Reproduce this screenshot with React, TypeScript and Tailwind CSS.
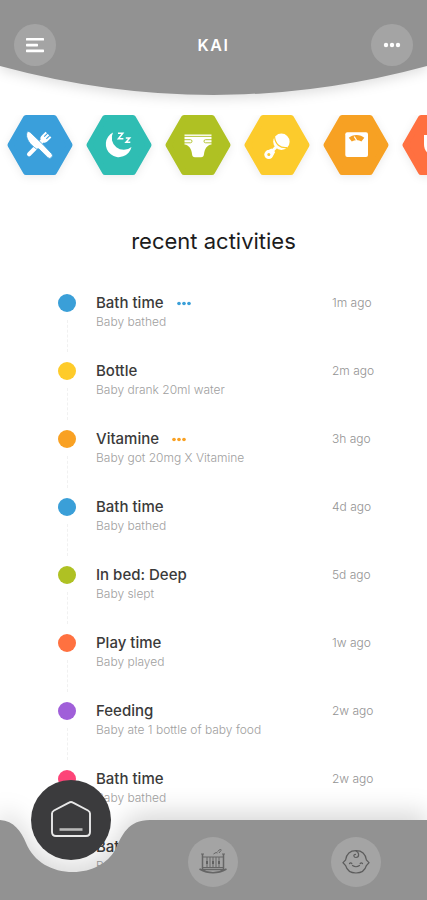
import type { ReactNode } from 'react';

interface Activity {
  title: string;
  detail: string;
  time: string;
  dot: string;
  more?: string;
}

const activities: Activity[] = [
  { title: 'Bath time', detail: 'Baby bathed', time: '1m ago', dot: 'bg-[#3a9fd8]', more: 'text-[#3a9fd8]' },
  { title: 'Bottle', detail: 'Baby drank 20ml water', time: '2m ago', dot: 'bg-[#fecb2a]' },
  { title: 'Vitamine', detail: 'Baby got 20mg X Vitamine', time: '3h ago', dot: 'bg-[#f9a123]', more: 'text-[#f9a123]' },
  { title: 'Bath time', detail: 'Baby bathed', time: '4d ago', dot: 'bg-[#3a9fd8]' },
  { title: 'In bed: Deep', detail: 'Baby slept', time: '5d ago', dot: 'bg-[#afc123]' },
  { title: 'Play time', detail: 'Baby played', time: '1w ago', dot: 'bg-[#ff7140]' },
  { title: 'Feeding', detail: 'Baby ate 1 bottle of baby food', time: '2w ago', dot: 'bg-[#a05fd9]' },
  { title: 'Bath time', detail: 'Baby bathed', time: '2w ago', dot: 'bg-[#fd4578]' },
  { title: 'Bath time', detail: 'Baby bathed', time: '3w ago', dot: 'bg-[#3a9fd8]' },
];

// Icons share the 66x60 hexagon viewBox, currentColor is the hexagon colour
const categories: { label: string; color: string; icon: ReactNode }[] = [
  {
    label: 'Feeding',
    color: 'text-[#3a9fdb]',
    icon: (
      <>
        <g transform="translate(31.5 29.5) rotate(45)">
          <path fill="#fff" d="M-4 -14 V-9 C-4 -6.5 -3.2 -5.4 -1.9 -5 V13.5 A2.1 2.1 0 0 0 2.3 13.5 V-5 C3.4 -5.4 4.2 -6.5 4.2 -9 V-14 Z" />
          <path stroke="currentColor" strokeWidth="1" d="M-1.5 -15 V-9.5 M1.6 -15 V-9.5" />
        </g>
        <path
          fill="#fff"
          stroke="currentColor"
          strokeWidth="0.8"
          d="M20.2 16.8 C21.5 16 23 17 24 18 L36 29.5 L44.5 38.5 A2.7 2.7 0 0 1 40.7 42.5 L31.8 33.8 L29.5 34 C23.5 30 17.5 23 20.2 16.8 Z"
        />
      </>
    ),
  },
  {
    label: 'Sleep',
    color: 'text-[#2fbdb3]',
    icon: (
      <>
        <path fill="#fff" d="M27 17.5 A13 13 0 1 0 45.5 32 A12 12 0 0 1 27 17.5 Z" />
        <path fill="none" stroke="#fff" strokeWidth="1.5" d="M32 18.3 H36.8 L32.4 23.8 H37.4 M39.8 23 H43.7 L40 27.2 H44.3" />
      </>
    ),
  },
  {
    label: 'Diaper',
    color: 'text-[#afc123]',
    icon: (
      <>
        <path
          fill="#fff"
          d="M19.5 19.5 H46.5 V29.5 C42 30 39.5 34 39 39 C38.8 41.3 37.8 42.3 36 42.3 H30 C28.2 42.3 27.2 41.3 27 39 C26.5 34 24 30 19.5 29.5 Z"
        />
        <path fill="none" stroke="currentColor" strokeWidth="0.9" d="M19 21.4 H47 M19 24.7 H25.5 Q27 24.7 27 26.2 Q27 27.8 25.5 27.8 H19 M47 24.7 H40.5 Q39 24.7 39 26.2 Q39 27.8 40.5 27.8 H47" />
      </>
    ),
  },
  {
    label: 'Play',
    color: 'text-[#fccb2c]',
    icon: (
      <>
        <path stroke="#fff" strokeWidth="3" d="M26 38.5 L33 31" />
        <path fill="#fff" d="M27.5 33.4 L31.2 37 L28.8 41.2 L22.4 36 Z" />
        <circle cx="24.8" cy="39.6" r="4.5" fill="#fff" />
        <circle cx="24.8" cy="39.6" r="1.5" fill="currentColor" />
        <circle cx="37.4" cy="26.8" r="8.2" fill="#fff" />
        <path fill="none" stroke="currentColor" strokeWidth="1.2" d="M30.6 22 C31.2 29 36 33.4 43 32.6" />
      </>
    ),
  },
  {
    label: 'Weight',
    color: 'text-[#f7a123]',
    icon: (
      <>
        <rect x="22.3" y="17.3" width="22.7" height="24.7" rx="2" fill="#fff" />
        <path fill="currentColor" d="M25.8 22.8 C29 18.9 38 18.9 41.3 22.8 L38.4 26.6 C35.8 24.9 31.5 24.9 28.8 26.6 Z" />
        <path stroke="#fff" strokeWidth="1.2" d="M31.2 21.5 L34 26" />
      </>
    ),
  },
  {
    label: 'Bath',
    color: 'text-[#ff7040]',
    icon: <path fill="#fff" d="M22 20 H44 V29 C44 36 39 40 33 40 C26 40 22 36 22 29 Z" />,
  },
];

function MoreDots({ className }: { className: string }) {
  return (
    <svg className={className} viewBox="0 0 18 6" fill="currentColor">
      <circle cx="3" cy="3" r="2.2" />
      <circle cx="9" cy="3" r="2.2" />
      <circle cx="15" cy="3" r="2.2" />
    </svg>
  );
}

function Header() {
  return (
    <header className="relative h-[95px] shrink-0">
      <svg
        className="absolute inset-0 h-full w-full overflow-visible drop-shadow-[0_4px_6px_rgba(0,0,0,0.12)]"
        viewBox="0 0 427 95"
        preserveAspectRatio="none"
      >
        <path fill="#929292" d="M0 0 H427 V66 Q213.5 124 0 66 Z" />
      </svg>
      <div className="relative flex items-center justify-between px-[14px] pt-6">
        <button aria-label="Menu" className="flex size-[42px] items-center justify-center rounded-full bg-[#a4a4a4]">
          <svg className="h-4 w-[18px]" viewBox="0 0 18 16" fill="#fff">
            <rect y="1" width="18" height="2.6" rx="0.6" />
            <rect y="6.8" width="12" height="2.6" rx="0.6" />
            <rect y="12.6" width="18" height="2.6" rx="0.6" />
          </svg>
        </button>
        <h1 className="text-base font-semibold tracking-widest text-white">KAI</h1>
        <button aria-label="More options" className="flex size-[42px] items-center justify-center rounded-full bg-[#a4a4a4]">
          <MoreDots className="h-[6px] w-[18px] text-white" />
        </button>
      </div>
    </header>
  );
}

function ActivityRow({ activity }: { activity: Activity }) {
  return (
    <li className="group flex h-[68px]">
      <div className="flex w-[18px] shrink-0 flex-col items-center">
        <span className={`mt-[2px] size-[18px] shrink-0 rounded-full ${activity.dot}`} />
        <span className="my-2 w-px flex-1 border-l border-dashed border-[#f1f1f1] group-last:hidden" />
      </div>
      <div className="ml-5 flex-1">
        <div className="flex items-center">
          <h3 className="text-[15px] leading-[22px] font-medium text-[#3a3a3a]">{activity.title}</h3>
          {activity.more && (
            <button aria-label="More" className={`ml-3 ${activity.more}`}>
              <MoreDots className="h-[5px] w-4" />
            </button>
          )}
        </div>
        <p className="text-xs leading-4 font-light text-[#a0a0a0]">{activity.detail}</p>
      </div>
      <time className="w-[95px] shrink-0 text-xs leading-[22px] font-light text-[#939393]">{activity.time}</time>
    </li>
  );
}

function BottomNav() {
  return (
    <nav className="fixed inset-x-0 bottom-0 h-20">
      <div className="absolute inset-0 flex drop-shadow-[0_-8px_12px_rgba(0,0,0,0.15)]">
        <svg className="h-20 w-[150px] shrink-0" viewBox="0 0 150 80">
          <path fill="#929292" d="M0 0 C14 1 21 11 26 23 C34 42 52 52 73 52 C92 52 108 43 115 30 C122 15 128 0 150 0 V80 H0 Z" />
        </svg>
        <div className="flex-1 bg-[#929292]" />
      </div>
      <div className="relative grid h-full grid-cols-3 justify-items-center">
        <button aria-label="Home" className="-mt-10 flex size-20 items-center justify-center rounded-full bg-[#3b3b3d]">
          <svg className="size-10" viewBox="0 0 40 40" fill="none" stroke="#e8e8e8" strokeWidth="1.9" strokeLinejoin="round">
            <path d="M20 2 Q21 2 22 2.6 L37 10.5 Q39 11.6 39 13.5 V32 Q39 36 35 36 H5 Q1 36 1 32 V13.5 Q1 11.6 3 10.5 L18 2.6 Q19 2 20 2 Z" />
            <path stroke="#b8b8b8" strokeWidth="2.6" d="M8.5 29.5 H31.5" />
          </svg>
        </button>
        <button aria-label="Nursery" className="mt-[17px] flex size-[50px] items-center justify-center rounded-full bg-[#a4a4a4]">
          <svg className="size-7" viewBox="0 0 28 28" fill="none" stroke="#666" strokeWidth="1">
            <path strokeWidth="1.5" d="M3.5 6 V22 M24.5 6 V22" />
            <path d="M2 6 H5 M23 6 H26 M4 9 H24 M4 19.5 H24 M8 9 V19.5 M11 9 V19.5 M14 9 V19.5 M17 9 V19.5 M20 9 V19.5" />
            <path fill="#606060" stroke="none" d="M7 13 h2 v3 h-2 z M13 13 h2 v3 h-2 z M19 13 h2 v3 h-2 z" />
            <path strokeWidth="1.6" d="M0.5 21 Q14 28.5 27.5 21 M3 21.5 H25" />
            <path d="M14.5 6 L17 4.5 L18.5 5 M18.5 3.5 L21 1.5 L22.5 2 M20 5 L22 2.5" />
          </svg>
        </button>
        <button aria-label="Baby" className="mt-[17px] flex size-[50px] items-center justify-center rounded-full bg-[#a4a4a4]">
          <svg className="size-7" viewBox="0 0 28 28" fill="none" stroke="#5c5c5c" strokeWidth="1.2" strokeLinecap="round">
            <path d="M3.6 12 C4.5 6 8.5 2.6 14 2.6 C19.5 2.6 23.5 6 24.4 12 L27 14.7 L24.4 17.5 C23 22.5 19 25 14 25 C9 25 5 22.5 3.6 17.5 L1 14.7 Z" />
            <path d="M14 3 C17.5 4.5 17.5 9.5 14 9.5 C11.5 9.5 11 6.5 13.5 6.3 M7.5 15.5 Q8.7 14.3 9.8 15.5 M18.2 15.5 Q19.3 14.3 20.5 15.5 M10.5 17.5 Q14 20 17.5 17.5" />
          </svg>
        </button>
      </div>
    </nav>
  );
}

export default function App() {
  return (
    <div className="flex h-screen flex-col overflow-hidden bg-white font-['Inter',sans-serif]">
      <Header />

      {/* Categories */}
      <div className="mt-5 flex shrink-0 gap-[13px] overflow-hidden pb-4 pl-[7px]">
        {categories.map((category) => (
          <button key={category.label} aria-label={category.label} className={`shrink-0 ${category.color}`}>
            <svg className="h-[60px] w-[66px] overflow-visible drop-shadow-[0_2px_4px_rgba(0,0,0,0.08)]" viewBox="0 0 66 60">
              <polygon
                points="3.5,30 19,3 47,3 62.5,30 47,57 19,57"
                fill="currentColor"
                stroke="currentColor"
                strokeWidth="6"
                strokeLinejoin="round"
              />
              {category.icon}
            </svg>
          </button>
        ))}
      </div>

      {/* Recent activities */}
      <main className="min-h-0 flex-1 overflow-hidden pt-[34px]">
        <h2 className="text-center text-[22px] leading-8 text-[#1c1c1c]">recent activities</h2>
        <ul className="mt-[35px] pl-[58px]">
          {activities.map((activity, index) => (
            <ActivityRow key={index} activity={activity} />
          ))}
        </ul>
      </main>

      <BottomNav />
    </div>
  );
}
